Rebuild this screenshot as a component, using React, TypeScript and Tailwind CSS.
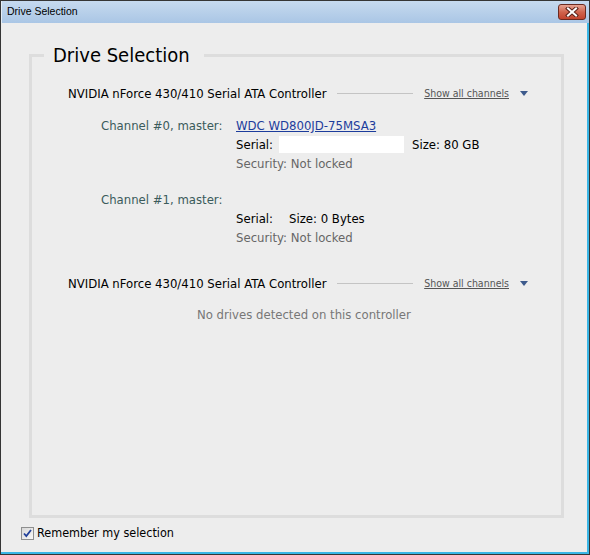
import React from 'react'

const channels = [
    { label: 'Channel #0, master:', model: 'WDC WD800JD-75MSA3', serial: true, size: '80 GB' },
    { label: 'Channel #1, master:', model: '', serial: false, size: '0 Bytes' },
]

function CloseButton() {
    return (
        <div className="flex h-[16px] w-[28px] items-center justify-center rounded-[3px] border border-[#6b2a20] bg-gradient-to-b from-[#e6a393] via-[#d0644d] to-[#c3432d]">
            <svg width="14" height="10" viewBox="0 0 14 10">
                <path d="M3 1.5 11 8.5M11 1.5 3 8.5" stroke="#5a2118" strokeWidth="4" strokeLinecap="square" />
                <path d="M3 1.5 11 8.5M11 1.5 3 8.5" stroke="#ffffff" strokeWidth="2" strokeLinecap="square" />
            </svg>
        </div>
    )
}

function ControllerRow({ className = '' }: { className?: string }) {
    return (
        <div className={`flex h-[19px] items-center pl-[36px] pr-[33px] ${className}`}>
            <span className="text-black whitespace-nowrap">NVIDIA nForce 430/410 Serial ATA Controller</span>
            <div className="ml-[11px] h-px flex-1 bg-[#c4c4c4]" />
            <span className="ml-[11px] text-[10.5px] text-[#555555] underline whitespace-nowrap">Show all channels</span>
            <svg className="ml-[11px]" width="8" height="5" viewBox="0 0 8 5">
                <path d="M0 0h8L4 5Z" fill="#3d5a8c" />
            </svg>
        </div>
    )
}

function Checkbox() {
    return (
        <div className="flex h-[13px] w-[13px] items-center justify-center border border-[#8e8f8f] bg-gradient-to-br from-[#d8d8d8] to-[#f8f8f8]">
            <svg width="9" height="9" viewBox="0 0 9 9">
                <path d="M1 4.5 3.3 7 8 1" stroke="#21409a" strokeWidth="1.8" fill="none" />
            </svg>
        </div>
    )
}

export default function App() {
    return (
        <div className="flex h-[555px] w-[590px] flex-col border border-[#353535] bg-[#ededed] font-['DejaVu_Sans_Condensed','DejaVu_Sans',sans-serif] text-[13px]">
            {/* title bar */}
            <div className="flex h-[22px] items-center justify-between border-l border-[#e4edf6] bg-gradient-to-b from-[#c6daef] to-[#aac6e5] pl-[5px] pr-[3px]">
                <span className="font-['Liberation_Sans',sans-serif] text-[10.5px] text-black">Drive Selection</span>
                <CloseButton />
            </div>

            <div className="flex flex-1 flex-col border-r-2 border-b-2 border-[#3ab6e6]">
                <div className="pl-[28px] pt-[21px]">
                    <fieldset className="h-[474px] w-[535px] border-[3px] border-[#dddddd]">
                        <legend className="ml-[12px] pl-[9px] pr-[14px] text-[20px] leading-[22px] text-black">
                            Drive Selection
                        </legend>

                        <ControllerRow className="mt-[18px]" />

                        {channels.map((ch, i) => (
                            <div
                                key={ch.label}
                                className={`grid grid-cols-[135px_1fr] pl-[69px] leading-[19px] ${i === 0 ? 'mt-[13px]' : 'mt-[17px]'}`}
                            >
                                <span className="text-[#3b5b5b]">{ch.label}</span>
                                <span>
                                    {ch.model ? (
                                        <span className="text-[#1c3c9c] underline">{ch.model}</span>
                                    ) : null}
                                </span>
                                <span />
                                <div className="flex h-[19px] items-center">
                                    <span className="text-black">Serial:</span>
                                    {ch.serial ? (
                                        <div className="ml-[6px] h-[17px] w-[125px] bg-white" />
                                    ) : null}
                                    <span className={`${ch.serial ? 'ml-[8px]' : 'ml-[16px]'} text-black`}>
                                        Size: {ch.size}
                                    </span>
                                </div>
                                <span />
                                <span className="text-[#666666]">Security: Not locked</span>
                            </div>
                        ))}

                        <ControllerRow className="mt-[27px]" />

                        <div className="mt-[12px] pl-[165px] leading-[19px] text-[#777777]">
                            No drives detected on this controller
                        </div>
                    </fieldset>
                </div>

                <div className="mt-[6px] flex h-[19px] items-center gap-[3px] pl-[20px]">
                    <Checkbox />
                    <span className="text-[12.5px] text-black">Remember my selection</span>
                </div>
            </div>
        </div>
    )
}
